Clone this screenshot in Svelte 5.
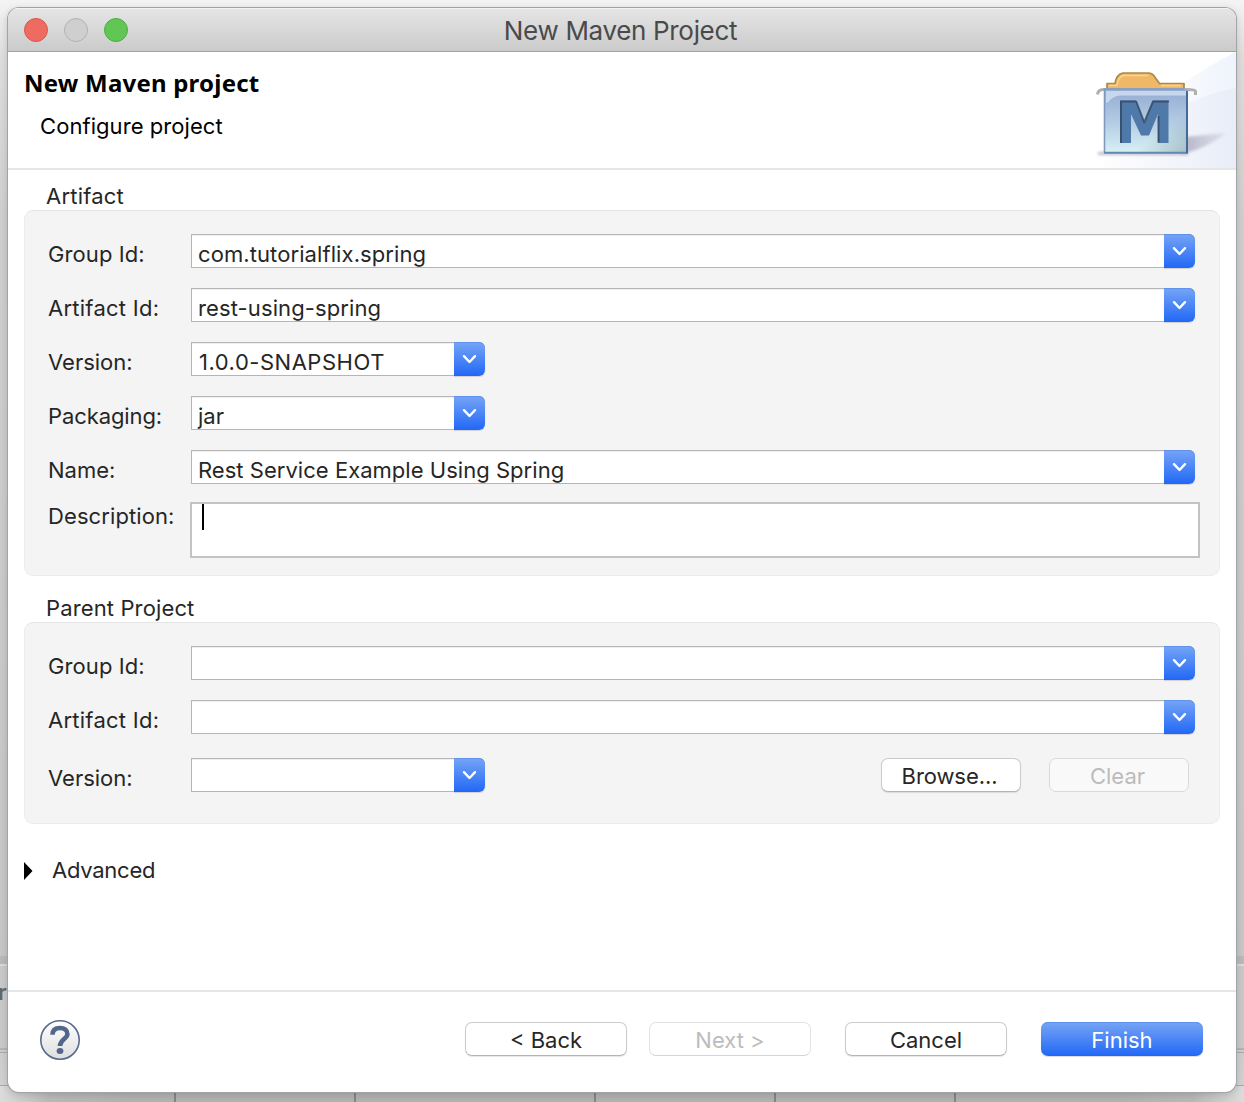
<script>
  const artifact = [
    { label: 'Group Id:', value: 'com.tutorialflix.spring', key: 'group' },
    { label: 'Artifact Id:', value: 'rest-using-spring', key: 'artifact' },
    { label: 'Version:', value: '1.0.0-SNAPSHOT', key: 'version', short: true },
    { label: 'Packaging:', value: 'jar', key: 'packaging', short: true },
    { label: 'Name:', value: 'Rest Service Example Using Spring', key: 'name' }
  ];
  const parent = [
    { label: 'Group Id:', value: '', key: 'group' },
    { label: 'Artifact Id:', value: '', key: 'artifact' }
  ];
  const columns = [174, 354, 594, 774, 954];
</script>

{#snippet combo(row)}
  <div class="combo" class:short={row.short}>
    <div class="input"><span class="v-{row.key}">{row.value}</span></div>
    <div class="arrow">
      <svg width="31" height="34" viewBox="0 0 31 34"><path d="M10 14.200l5.500 5.800 5.500-5.800" fill="none" stroke="#fff" stroke-width="2.400" stroke-linecap="round" stroke-linejoin="round" /></svg>
    </div>
  </div>
{/snippet}

<div class="desktop">
  <svg class="behind" width="1244" height="1102" viewBox="0 0 1244 1102">
    <defs>
      <linearGradient id="desk" x1="0" y1="0" x2="0" y2="1">
        <stop offset="0" stop-color="#f4f4f4" />
        <stop offset=".05" stop-color="#dedede" />
        <stop offset=".2" stop-color="#cfcfcf" />
        <stop offset=".9" stop-color="#c6c6c6" />
        <stop offset="1" stop-color="#d4d4d4" />
      </linearGradient>
      <linearGradient id="under" x1="0" y1="0" x2="1" y2="0">
        <stop offset="0" stop-color="#dcdcdc" />
        <stop offset=".04" stop-color="#b9b9b9" />
        <stop offset=".1" stop-color="#b2b2b2" />
        <stop offset=".9" stop-color="#b2b2b2" />
        <stop offset=".96" stop-color="#b9b9b9" />
        <stop offset="1" stop-color="#dcdcdc" />
      </linearGradient>
    </defs>
    <rect width="1244" height="1102" fill="url(#desk)" />
    <path d="M0 956h1244v8H0z" fill="#b9b9b9" />
    <path d="M0 964h1244v2H0z" fill="#dadada" />
    <path d="M0 966h1244v82H0z" fill="#c9c9c9" />
    <path d="M0 1048h1244v2H0z" fill="#b4b4b4" />
    <path d="M0 1052.500h1244M0 1085.500h1244" stroke="#a8a8a8" />
    <rect y="1086" width="1244" height="16" fill="url(#under)" />
    {#each columns as x}
      <rect {x} y="1086" width="2" height="16" fill="#858585" />
    {/each}
    <text x="-2" y="1000" class="stray">r</text>
  </svg>

  <main class="dialog">
    <header class="titlebar">
      <div class="lights"><i class="red"></i><i class="gray"></i><i class="green"></i></div>
      <span class="window-title">New Maven Project</span>
    </header>

    <section class="banner">
      <div class="heading">
        <h1>New Maven project</h1>
        <p>Configure project</p>
      </div>
      <svg class="art" width="150" height="116" viewBox="0 0 150 116">
        <defs>
          <linearGradient id="sky" x1="0" y1="0" x2="1" y2="0">
            <stop offset="0" stop-color="#fff" />
            <stop offset="1" stop-color="#e9edf8" />
          </linearGradient>
          <linearGradient id="ray" x1="0" y1="0" x2="1" y2="0">
            <stop offset=".3" stop-color="#fff" />
            <stop offset="1" stop-color="#eff3fc" />
          </linearGradient>
          <linearGradient id="box" x1="0" y1="0" x2="0" y2="1">
            <stop offset="0" stop-color="#93add4" />
            <stop offset=".5" stop-color="#b3cbe3" />
            <stop offset="1" stop-color="#d8f1f3" />
          </linearGradient>
          <linearGradient id="shade" x1="0" y1="0" x2="1" y2="0">
            <stop offset="0" stop-color="#a59fb6" stop-opacity=".8" />
            <stop offset="1" stop-color="#b9bccf" stop-opacity=".3" />
          </linearGradient>
          <linearGradient id="corner" x1=".4" y1=".4" x2="1" y2="1">
            <stop offset=".45" stop-color="#7c9a9f" stop-opacity="0" />
            <stop offset="1" stop-color="#7c9a9f" stop-opacity=".55" />
          </linearGradient>
          <filter id="soft" filterUnits="userSpaceOnUse" x="0" y="60" width="150" height="56"><feGaussianBlur stdDeviation="1.800" /></filter>
          <filter id="fine" filterUnits="userSpaceOnUse" x="0" y="0" width="150" height="116"><feGaussianBlur stdDeviation=".45" /></filter>
        </defs>
        <path d="M20 116Q70 38 150 0V116z" fill="url(#ray)" />
        <path d="M10 116Q80 48 150 36V116z" fill="url(#sky)" />
        <path d="M100 85Q118 83 140 81Q128 91 110 98L96 102z" fill="url(#shade)" filter="url(#soft)" />
        <path d="M12 101.500h90" stroke="#a99fb5" stroke-width="3" opacity=".7" filter="url(#soft)" />
        <g filter="url(#fine)">
          <path d="M21 40v-8.500h8q1.500-9.500 8-10.500h25q5 0 7.500 5l4 5.500H98V40z" fill="#efb767" stroke="#aa8a48" stroke-width="1.700" stroke-linejoin="round" />
          <path d="M23 33.500h8q1-9 7-10h24M75 33.500h20" fill="none" stroke="#fad48f" stroke-width="1.500" />
          <path d="M11.500 42.500q.5-5 6-5h82q10 0 10 1.500v4" fill="none" stroke="#b0b0b0" stroke-width="3" />
          <path d="M18.500 38h83v63h-83z" fill="url(#box)" />
          <path d="M18.500 38h83v63h-83z" fill="url(#corner)" />
          <path d="M20 39h80v4.500H34q-8 1-12 7h-2z" fill="#d3e0f3" opacity=".8" />
          <path d="M18.500 101V37h80" fill="none" stroke="#7f99bd" stroke-width="1.600" />
          <path d="M18 100.800h83" stroke="#6289ad" stroke-width="2" />
          <path d="M101 39v62.500" stroke="#426b98" stroke-width="2" />
          <path d="M34 48.500h16l8.500 22 8.500-22h15.500V91H72V62l-9 21.500h-8L45 62v29H34z" fill="#5079a9" />
          <path d="M35 91V49.500h15M58 71l9-21.500h16M72.500 64v26.500M50 49l8.500 22" fill="none" stroke="#32475f" stroke-width="2" opacity=".8" />
        </g>
      </svg>
    </section>

    <div class="body">
      <h2 class="g-artifact">Artifact</h2>
      <section class="group">
        {#each artifact as row}
          <div class="row"><label class="l-{row.key}">{row.label}</label>{@render combo(row)}</div>
        {/each}
        <div class="row description"><label class="l-description">Description:</label><div class="area"><i class="caret"></i></div></div>
      </section>

      <h2 class="g-parent">Parent Project</h2>
      <section class="group parent">
        {#each parent as row}
          <div class="row"><label class="l-{row.key}">{row.label}</label>{@render combo(row)}</div>
        {/each}
        <div class="row last">
          <label class="l-version">Version:</label>{@render combo({ value: '', key: 'version', short: true })}
          <div class="actions">
            <button class="b-browse">Browse...</button>
            <button class="b-clear" disabled>Clear</button>
          </div>
        </div>
      </section>

      <div class="advanced">
        <svg width="10" height="20" viewBox="0 0 10 20"><path d="M0 2l8.500 9-8.500 9z" fill="#000" /></svg>
        <span>Advanced</span>
      </div>
    </div>

    <footer>
      <svg class="help" width="40" height="40" viewBox="0 0 40 40">
        <defs>
          <linearGradient id="disc" x1="0" y1="0" x2="0" y2="1">
            <stop offset="0" stop-color="#fff" />
            <stop offset="1" stop-color="#dedede" />
          </linearGradient>
        </defs>
        <circle cx="20" cy="20" r="19.200" fill="url(#disc)" stroke="#576a8c" stroke-width="1.600" />
        <path d="M12.500 14.800C12.500 9.800 15.300 8 20 8c4.600 0 7.400 2.400 7.400 6 0 5-7.400 5.200-7.400 12" fill="none" stroke="#53678c" stroke-width="4.600" />
        <ellipse cx="20" cy="31" rx="3.400" ry="2.900" fill="#53678c" />
      </svg>
      <div class="buttons">
        <button class="b-back">&lt; Back</button>
        <button class="b-next" disabled>Next &gt;</button>
        <button class="b-cancel">Cancel</button>
        <button class="b-finish primary">Finish</button>
      </div>
    </footer>
  </main>
</div>

<style>
  :global(body) { margin: 0; }
  .desktop {
    position: relative;
    box-sizing: border-box;
    width: 1244px;
    height: 1102px;
    padding: 8px 8px 10px;
    overflow: hidden;
    font: 22px/28px Inter, "Liberation Sans", sans-serif;
    color: #262626;
  }
  .behind { position: absolute; inset: 0; }
  .stray { font: 600 22px Inter, sans-serif; fill: #666; }
  .dialog {
    position: relative;
    display: flex;
    flex-direction: column;
    height: 1084px;
    border-radius: 11px;
    background: #fff;
    box-shadow: 0 0 0 1px #a3a3a3, 0 2px 8px rgba(0, 0, 0, .18);
    overflow: hidden;
  }
  .titlebar {
    display: grid;
    grid-template-columns: 1fr auto 1fr;
    align-items: center;
    box-sizing: border-box;
    height: 44px;
    border-bottom: 1px solid #a2a2a2;
    background: linear-gradient(#e5e5e5, #cbcbcb);
    box-shadow: inset 0 1px #f3f3f3;
  }
  .lights { display: flex; gap: 16px; padding-left: 16px; }
  .lights i { box-sizing: border-box; width: 24px; height: 24px; border-radius: 50%; border: 1px solid; }
  .lights .red { background: #ed6b60; border-color: #d9574d; }
  .lights .gray { background: #cfcfcf; border-color: #b1b1b1; }
  .lights .green { background: #61c654; border-color: #4fae42; }
  .window-title { padding: 3px 3px 0 0; font-size: 26px; color: #4a4a4a; letter-spacing: -.33px; white-space: nowrap; }
  .banner {
    display: flex;
    justify-content: space-between;
    box-sizing: border-box;
    height: 118px;
    border-bottom: 2px solid #e5e5e5;
  }
  .art { display: block; }
  .heading { padding: 16px 0 0 16px; color: #000; }
  h1 { margin: 0; font: 700 24px/30px "Noto Sans", sans-serif; letter-spacing: .22px; white-space: nowrap; }
  .heading p { margin: 14px 0 0 16px; letter-spacing: .06px; }
  .body { flex: 1; padding: 12px 16px 0; }
  h2 { margin: 0 0 0 22px; font-size: 22px; line-height: 28px; font-weight: 400; }
  .g-artifact { letter-spacing: .22px; }
  .g-parent { letter-spacing: .13px; }
  .group {
    display: flex;
    flex-direction: column;
    gap: 20px;
    box-sizing: border-box;
    height: 366px;
    padding: 23px 19px 0 23px;
    border: 1px solid #ececec;
    border-top-color: #e4e4e4;
    border-radius: 9px;
    background: #f4f4f4;
    margin-bottom: 18px;
  }
  .parent { height: 202px; margin-bottom: 0; }
  .row { display: flex; height: 34px; padding-right: 5px; }
  .row label { flex: 0 0 143px; line-height: 40px; white-space: nowrap; }
  .l-group { letter-spacing: .1px; }
  .l-artifact { letter-spacing: .26px; }
  .l-packaging { letter-spacing: -.1px; }
  .l-description { letter-spacing: .09px; }
  .v-group { letter-spacing: .09px; }
  .v-artifact { letter-spacing: .11px; }
  .v-version { padding-left: 1px; letter-spacing: .52px; }
  .v-name { letter-spacing: .03px; }
  .combo { display: flex; flex: 1; height: 34px; }
  .short { flex: 0 0 294px; }
  .input {
    box-sizing: border-box;
    flex: 1;
    border: 1px solid #b5b5b5;
    border-right: 0;
    padding-left: 6px;
    background: #fff;
    line-height: 38px;
    white-space: nowrap;
    box-shadow: inset 0 1px #f0f0f0;
  }
  .arrow {
    width: 31px;
    height: 34px;
    border-radius: 0 6px 6px 0;
    background: linear-gradient(#76a5f5, #2268f6);
    box-shadow: inset 0 1px #5e92ee, 0 1px 1px rgba(0, 0, 0, .15);
  }
  .arrow svg { display: block; }
  .description { margin-top: -2px; height: 56px; padding-right: 0; }
  .description label { flex-basis: 142px; line-height: 28px; }
  .area { box-sizing: border-box; flex: 1; border: 2px solid #c3c3c3; background: #fff; padding-left: 10px; }
  .caret { display: block; width: 2px; height: 26px; background: #000; }
  .last { margin-top: 4px; padding-right: 11px; }
  .actions { display: flex; gap: 28px; margin-left: auto; }
  button {
    box-sizing: border-box;
    width: 162px;
    height: 34px;
    padding: 2px 0 0;
    border: 1px solid #cbcbcb;
    border-bottom-color: #b4b4b4;
    border-radius: 7px;
    background: #fff;
    box-shadow: 0 1px 1px rgba(0, 0, 0, .1);
    font: 22px/30px Inter, sans-serif;
    color: #262626;
  }
  .actions button { width: 140px; height: 34px; padding-right: 3px; }
  .b-browse { letter-spacing: -.08px; }
  button:disabled { color: #bcbcbc; border-color: #e3e3e3; border-bottom-color: #d5d5d5; background: transparent; box-shadow: none; }
  .actions button:disabled { background: #f9f9f9; border-color: #dadada; }
  .primary { border: 0; color: #fff; background: linear-gradient(#76a5f5, #2268f6); box-shadow: inset 0 1px #5e92ee, 0 1px 1px rgba(0, 0, 0, .15); }
  .advanced { display: flex; align-items: center; gap: 18px; margin-top: 32px; letter-spacing: -.25px; }
  footer {
    display: flex;
    justify-content: space-between;
    box-sizing: border-box;
    height: 102px;
    padding: 28px 33px 0 32px;
    border-top: 2px solid #e5e5e5;
  }
  .buttons { display: flex; padding-top: 2px; }
  .b-next { margin-left: 22px; }
  .b-cancel, .b-finish { margin-left: 34px; }
</style>
